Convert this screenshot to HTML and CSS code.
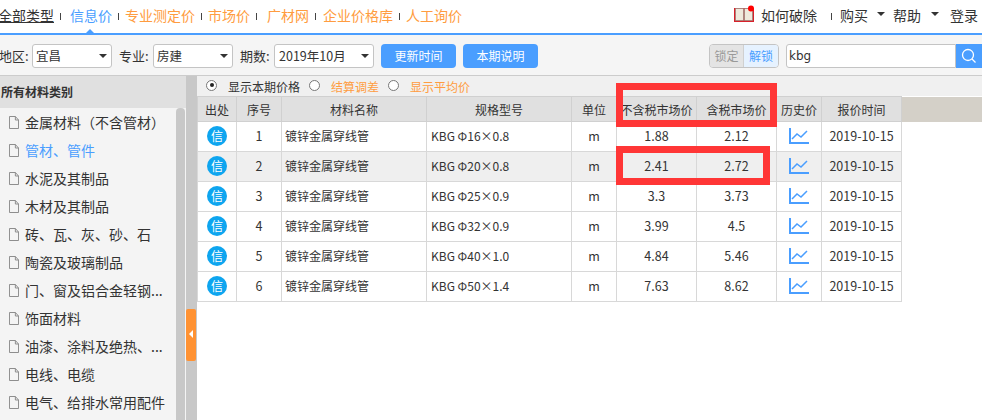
FILE: index.html
```html
<!DOCTYPE html>
<html lang="zh-CN">
<head>
    <meta charset="UTF-8">
    <title>信息价</title>
    <link rel="stylesheet" href="styles.css">
</head>
<body>
<div class="page">
    <header class="topnav">
        <nav class="types">
            <a class="type-all">全部类型</a><i class="sep gap-9"></i>
            <a class="type-active">信息价</a><i class="sep gap-6"></i>
            <a>专业测定价</a><i class="sep gap-6"></i>
            <a>市场价</a><i class="sep gap-10"></i>
            <a>广材网</a><i class="sep gap-7"></i>
            <a>企业价格库</a><i class="sep gap-6"></i>
            <a>人工询价</a>
        </nav>
        <div class="user-links">
            <svg class="book" width="21" height="18" viewBox="0 0 21 18">
                <path d="M0 3h20v14H0z" fill="#d8202a"/>
                <path d="M1.500 3.500h8v12h-8zM10.500 3.500h8v12h-8z" fill="#efe9dc" stroke="#8a8378" stroke-width=".6"/>
                <circle cx="17" cy="3.500" r="3" fill="#f00"/>
            </svg>
            <a class="how">如何破除</a>
            <i class="sep"></i>
            <a>购买</a><b class="caret"></b>
            <a>帮助</a><b class="caret caret-last"></b>
            <a>登录</a>
        </div>
    </header>

    <div class="toolbar">
        <label>地区:</label>
        <div class="select sel-short">宜昌<b class="caret"></b></div>
        <label>专业:</label>
        <div class="select sel-short">房建<b class="caret"></b></div>
        <label>期数:</label>
        <div class="select sel-long">2019年10月<b class="caret"></b></div>
        <button class="btn">更新时间</button>
        <button class="btn">本期说明</button>
        <div class="lock">
            <span class="lock-off">锁定</span><span class="lock-on">解锁</span>
        </div>
        <div class="search">
            <input type="text" value="kbg">
            <button class="search-btn">
                <svg width="16" height="16" viewBox="0 0 16 16" fill="none" stroke="#fff" stroke-width="1.300">
                    <circle cx="7" cy="7" r="5.500"/>
                    <path d="M11 11l3.500 3.500"/>
                </svg>
            </button>
        </div>
    </div>

    <div class="main">
        <aside class="sidebar">
            <h3>所有材料类别</h3>
            <div class="cat-wrap">
                <ul class="cats">
                    <li><svg class="doc" viewBox="0 0 11 13" preserveAspectRatio="none"><path d="M.5.500h6.500l3.500 3.500v8.500h-10zM7 .5v3.500h3.500"/></svg><span>金属材料（不含管材）</span></li>
                    <li class="current"><svg class="doc" viewBox="0 0 11 13" preserveAspectRatio="none"><path d="M.5.500h6.500l3.500 3.500v8.500h-10zM7 .5v3.500h3.500"/></svg><span>管材、管件</span></li>
                    <li><svg class="doc" viewBox="0 0 11 13" preserveAspectRatio="none"><path d="M.5.500h6.500l3.500 3.500v8.500h-10zM7 .5v3.500h3.500"/></svg><span>水泥及其制品</span></li>
                    <li><svg class="doc" viewBox="0 0 11 13" preserveAspectRatio="none"><path d="M.5.500h6.500l3.500 3.500v8.500h-10zM7 .5v3.500h3.500"/></svg><span>木材及其制品</span></li>
                    <li><svg class="doc" viewBox="0 0 11 13" preserveAspectRatio="none"><path d="M.5.500h6.500l3.500 3.500v8.500h-10zM7 .5v3.500h3.500"/></svg><span>砖、瓦、灰、砂、石</span></li>
                    <li><svg class="doc" viewBox="0 0 11 13" preserveAspectRatio="none"><path d="M.5.500h6.500l3.500 3.500v8.500h-10zM7 .5v3.500h3.500"/></svg><span>陶瓷及玻璃制品</span></li>
                    <li><svg class="doc" viewBox="0 0 11 13" preserveAspectRatio="none"><path d="M.5.500h6.500l3.500 3.500v8.500h-10zM7 .5v3.500h3.500"/></svg><span>门、窗及铝合金轻钢...</span></li>
                    <li><svg class="doc" viewBox="0 0 11 13" preserveAspectRatio="none"><path d="M.5.500h6.500l3.500 3.500v8.500h-10zM7 .5v3.500h3.500"/></svg><span>饰面材料</span></li>
                    <li><svg class="doc" viewBox="0 0 11 13" preserveAspectRatio="none"><path d="M.5.500h6.500l3.500 3.500v8.500h-10zM7 .5v3.500h3.500"/></svg><span>油漆、涂料及绝热、...</span></li>
                    <li><svg class="doc" viewBox="0 0 11 13" preserveAspectRatio="none"><path d="M.5.500h6.500l3.500 3.500v8.500h-10zM7 .5v3.500h3.500"/></svg><span>电线、电缆</span></li>
                    <li><svg class="doc" viewBox="0 0 11 13" preserveAspectRatio="none"><path d="M.5.500h6.500l3.500 3.500v8.500h-10zM7 .5v3.500h3.500"/></svg><span>电气、给排水常用配件</span></li>
                </ul>
                <div class="scrollbar"></div>
            </div>
        </aside>

        <div class="splitter">
            <div class="handle"></div>
        </div>

        <section class="content">
            <div class="radios">
                <i class="radio checked"></i><span class="radio-text">显示本期价格</span>
                <i class="radio"></i><span class="radio-text orange">结算调差</span>
                <i class="radio"></i><span class="radio-text orange">显示平均价</span>
            </div>
            <table class="prices">
                <colgroup>
                    <col class="c-src"><col class="c-no"><col class="c-name"><col class="c-spec"><col class="c-no">
                    <col class="c-price"><col class="c-price"><col class="c-no"><col class="c-price">
                </colgroup>
                <thead>
                    <tr>
                        <th>出处</th><th>序号</th><th>材料名称</th><th>规格型号</th><th>单位</th>
                        <th>不含税市场价</th><th>含税市场价</th><th>历史价</th><th>报价时间</th><th class="filler"></th>
                    </tr>
                </thead>
                <tbody>
                    <tr>
                        <td><span class="src">信</span></td><td>1</td><td class="left">镀锌金属穿线管</td><td class="left">KBG Φ16×0.8</td><td>m</td>
                        <td>1.88</td><td>2.12</td><td><svg class="trend" viewBox="0 0 20 16"><path class="axis" d="M1 0v15h19"/><path d="M3 11l5-5 4 3 6-6"/></svg></td><td>2019-10-15</td>
                    </tr>
                    <tr class="alt">
                        <td><span class="src">信</span></td><td>2</td><td class="left">镀锌金属穿线管</td><td class="left">KBG Φ20×0.8</td><td>m</td>
                        <td>2.41</td><td>2.72</td><td><svg class="trend" viewBox="0 0 20 16"><path class="axis" d="M1 0v15h19"/><path d="M3 11l5-5 4 3 6-6"/></svg></td><td>2019-10-15</td>
                    </tr>
                    <tr>
                        <td><span class="src">信</span></td><td>3</td><td class="left">镀锌金属穿线管</td><td class="left">KBG Φ25×0.9</td><td>m</td>
                        <td>3.3</td><td>3.73</td><td><svg class="trend" viewBox="0 0 20 16"><path class="axis" d="M1 0v15h19"/><path d="M3 11l5-5 4 3 6-6"/></svg></td><td>2019-10-15</td>
                    </tr>
                    <tr>
                        <td><span class="src">信</span></td><td>4</td><td class="left">镀锌金属穿线管</td><td class="left">KBG Φ32×0.9</td><td>m</td>
                        <td>3.99</td><td>4.5</td><td><svg class="trend" viewBox="0 0 20 16"><path class="axis" d="M1 0v15h19"/><path d="M3 11l5-5 4 3 6-6"/></svg></td><td>2019-10-15</td>
                    </tr>
                    <tr>
                        <td><span class="src">信</span></td><td>5</td><td class="left">镀锌金属穿线管</td><td class="left">KBG Φ40×1.0</td><td>m</td>
                        <td>4.84</td><td>5.46</td><td><svg class="trend" viewBox="0 0 20 16"><path class="axis" d="M1 0v15h19"/><path d="M3 11l5-5 4 3 6-6"/></svg></td><td>2019-10-15</td>
                    </tr>
                    <tr>
                        <td><span class="src">信</span></td><td>6</td><td class="left">镀锌金属穿线管</td><td class="left">KBG Φ50×1.4</td><td>m</td>
                        <td>7.63</td><td>8.62</td><td><svg class="trend" viewBox="0 0 20 16"><path class="axis" d="M1 0v15h19"/><path d="M3 11l5-5 4 3 6-6"/></svg></td><td>2019-10-15</td>
                    </tr>
                </tbody>
            </table>
        </section>
    </div>

    <!-- red marks drawn over the screenshot -->
    <div class="mark mark-head"></div>
    <div class="mark mark-row"></div>
</div>
</body>
</html>
```

FILE: styles.css
```css
* {
  box-sizing: border-box;
}

html, body {
  margin: 0;
  padding: 0;
  background: #fff;
}

body {
  font-family: "Noto Sans CJK SC", "Liberation Sans", sans-serif;
  font-size: 12px;
  color: #333;
}

.page {
  position: relative;
  width: 982px;
  height: 420px;
  overflow: hidden;
}

/* top nav */
.topnav {
  display: flex;
  justify-content: space-between;
  height: 35px;
  border-bottom: 2px solid #4a9eff;
  font-size: 14px;
  line-height: 31px;
}

.types {
  display: flex;
  align-items: flex-start;
  margin-left: -2px;
  color: #ff9c40;
}

.types .sep {
  margin-left: 6px;
}

.sep {
  display: block;
  width: 1px;
  height: 7px;
  margin-top: 13px;
  background: #444;
}

.gap-6 { margin-right: 6px; }
.gap-7 { margin-right: 7px; }
.gap-9 { margin-right: 9px; }
.gap-10 { margin-right: 10px; }

.type-all {
  position: relative;
  color: #333;
}

.type-all::after {
  content: "";
  position: absolute;
  left: 0;
  right: 0;
  top: 22px;
  height: 1px;
  background: #333;
}

.type-active {
  position: relative;
  color: #4a9eff;
}

.type-active::after {
  content: "";
  position: absolute;
  left: 16px;
  top: 29px;
  border: 4px solid transparent;
  border-top: 0;
  border-bottom-color: #4a9eff;
}

.user-links {
  display: flex;
  align-items: flex-start;
  padding-right: 4px;
  color: #333;
}

.book {
  margin: 5px 6px 0 0;
}

.how {
  margin-right: 14px;
}

.user-links .sep {
  margin-right: 8px;
}

.user-links .caret {
  margin: 12px 8px 0 9px;
}

.user-links .caret-last {
  margin: 12px 11px 0 10px;
}

.caret {
  display: block;
  width: 0;
  height: 0;
  border: 4px solid transparent;
  border-bottom: 0;
  border-top-color: #333;
}

/* filters */
.toolbar {
  display: flex;
  align-items: center;
  height: 41px;
  padding-top: 1px;
  background: #f5f5f5;
  border-bottom: 1px solid #ccc;
  font-size: 13px;
}

.toolbar label {
  flex-shrink: 0;
  width: 34px;
  margin-left: 7px;
  color: #333;
}

.toolbar label:first-child {
  margin-left: -1px;
  width: 33px;
}

.select {
  display: flex;
  align-items: center;
  justify-content: space-between;
  height: 24px;
  padding: 0 4px 0 3px;
  background: #fff;
  border: 1px solid #c4c4c4;
  border-radius: 3px;
  font-size: 12.500px;
}

.sel-short { width: 80px; }
.sel-long { width: 100px; padding-left: 4px; }

.btn {
  width: 75px;
  height: 24px;
  margin-left: 7px;
  padding: 0;
  border: 0;
  border-radius: 4px;
  background: #4a9eff;
  color: #fff;
  font: inherit;
  font-size: 12px;
}

.lock {
  display: flex;
  height: 24px;
  margin-left: auto;
  border: 1px solid #c4c4c4;
  border-radius: 4px;
  overflow: hidden;
  line-height: 22px;
  font-size: 12px;
}

.lock span {
  display: block;
  text-align: center;
}

.lock-off {
  width: 33px;
  background: #e4e4e4;
  color: #999;
}

.lock-on {
  width: 35px;
  background: #e6f2ff;
  color: #4a9eff;
  border-left: 1px solid #d0d0d0;
}

.search {
  display: flex;
  height: 24px;
  margin-left: 7px;
}

.search input {
  width: 170px;
  height: 24px;
  padding: 0 2px;
  border: 1px solid #c4c4c4;
  border-radius: 3px 0 0 3px;
  background: #fff;
  color: #333;
  font-family: "DejaVu Sans", sans-serif;
  font-size: 12px;
  outline: none;
}

.search-btn {
  display: flex;
  align-items: center;
  justify-content: center;
  width: 26px;
  height: 24px;
  padding: 0;
  border: 0;
  background: #4a9eff;
}

/* body */
.main {
  display: flex;
  height: 345px;
}

.sidebar {
  width: 186px;
  flex-shrink: 0;
  background: #f4f4f4;
}

.sidebar h3 {
  height: 32px;
  margin: 0;
  padding-left: 1px;
  background: #e0e0e0;
  font-size: 12px;
  font-weight: 700;
  line-height: 32px;
}

.cat-wrap {
  display: flex;
  justify-content: space-between;
  height: 313px;
  overflow: hidden;
}

.cats {
  width: 176px;
  margin: 0;
  padding: 0 0 0 9px;
  list-style: none;
  font-size: 14px;
}

.cats li {
  display: flex;
  align-items: center;
  height: 28px;
}

.cats span {
  margin-left: 6px;
  white-space: nowrap;
}

.cats .current {
  color: #4a9eff;
}

.doc {
  width: 10px;
  height: 13px;
  flex-shrink: 0;
  fill: none;
  stroke: #888;
  stroke-width: 1;
}

.scrollbar {
  width: 9px;
  margin-right: 1px;
  background: #c8c8c8;
  border-radius: 4px 4px 0 0;
}

.splitter {
  position: relative;
  width: 11px;
  flex-shrink: 0;
  background: #c8c8c8;
}

.handle {
  position: absolute;
  left: 0;
  top: 233px;
  width: 10px;
  height: 52px;
  background: #ff9233;
  border-radius: 2px;
}

.handle::after {
  content: "";
  position: absolute;
  left: 3px;
  top: 21px;
  border: 4.500px solid transparent;
  border-left: 0;
  border-right-color: #fff;
}

.content {
  flex: 1;
  min-width: 0;
}

.radios {
  display: flex;
  align-items: center;
  height: 20px;
  padding: 0 0 2px 9px;
  background: #f0f0f0;
}

.radio {
  display: block;
  position: relative;
  width: 11px;
  height: 11px;
  background: #fff;
  border: 1px solid #777;
  border-radius: 50%;
  margin-right: 11px;
}

.radio.checked::after {
  content: "";
  position: absolute;
  left: 2.500px;
  top: 2.500px;
  width: 4px;
  height: 4px;
  background: #222;
  border-radius: 50%;
}

.radio-text {
  margin-right: 9px;
  padding-top: 2px;
}

.orange {
  color: #ff9c40;
}

/* price table */
.prices {
  width: 785px;
  table-layout: fixed;
  border-collapse: collapse;
  font-size: 12px;
}

.c-src { width: 39px; }
.c-no { width: 45px; }
.c-name, .c-spec { width: 145px; }
.c-price { width: 80px; }

.prices th {
  height: 25px;
  padding: 0;
  background: #e0e0e0;
  border: 1px solid #d0d0d0;
  font-weight: 400;
  white-space: nowrap;
}

.prices th.filler {
  width: 81px;
  background: #d4d0c8;
  border: 0;
}

.prices td {
  height: 30px;
  padding: 0 0 2px;
  border: 1px solid #d8d8d8;
  text-align: center;
  font-size: 12.500px;
}

.prices td.left {
  padding-left: 3px;
  text-align: left;
  font-size: 12px;
}

.prices td.left + td.left {
  padding-left: 4px;
}

.prices .alt td {
  background: #efefef;
}

.src {
  display: inline-block;
  width: 20px;
  height: 20px;
  background: #0ea5ef;
  border-radius: 50%;
  color: #fff;
  font-size: 12px;
  line-height: 20px;
  vertical-align: middle;
}

.trend {
  display: block;
  width: 20px;
  height: 16px;
  margin: 0 auto;
  fill: none;
  stroke: #4a9eff;
  stroke-width: 1.500;
}

.trend .axis {
  stroke-width: 2;
}

/* red annotation */
.mark {
  position: absolute;
  border: 7px solid #ff3636;
}

.mark-head {
  left: 616px;
  top: 83px;
  width: 161px;
  height: 44px;
}

.mark-row {
  left: 616px;
  top: 146px;
  width: 154px;
  height: 39px;
}
```
